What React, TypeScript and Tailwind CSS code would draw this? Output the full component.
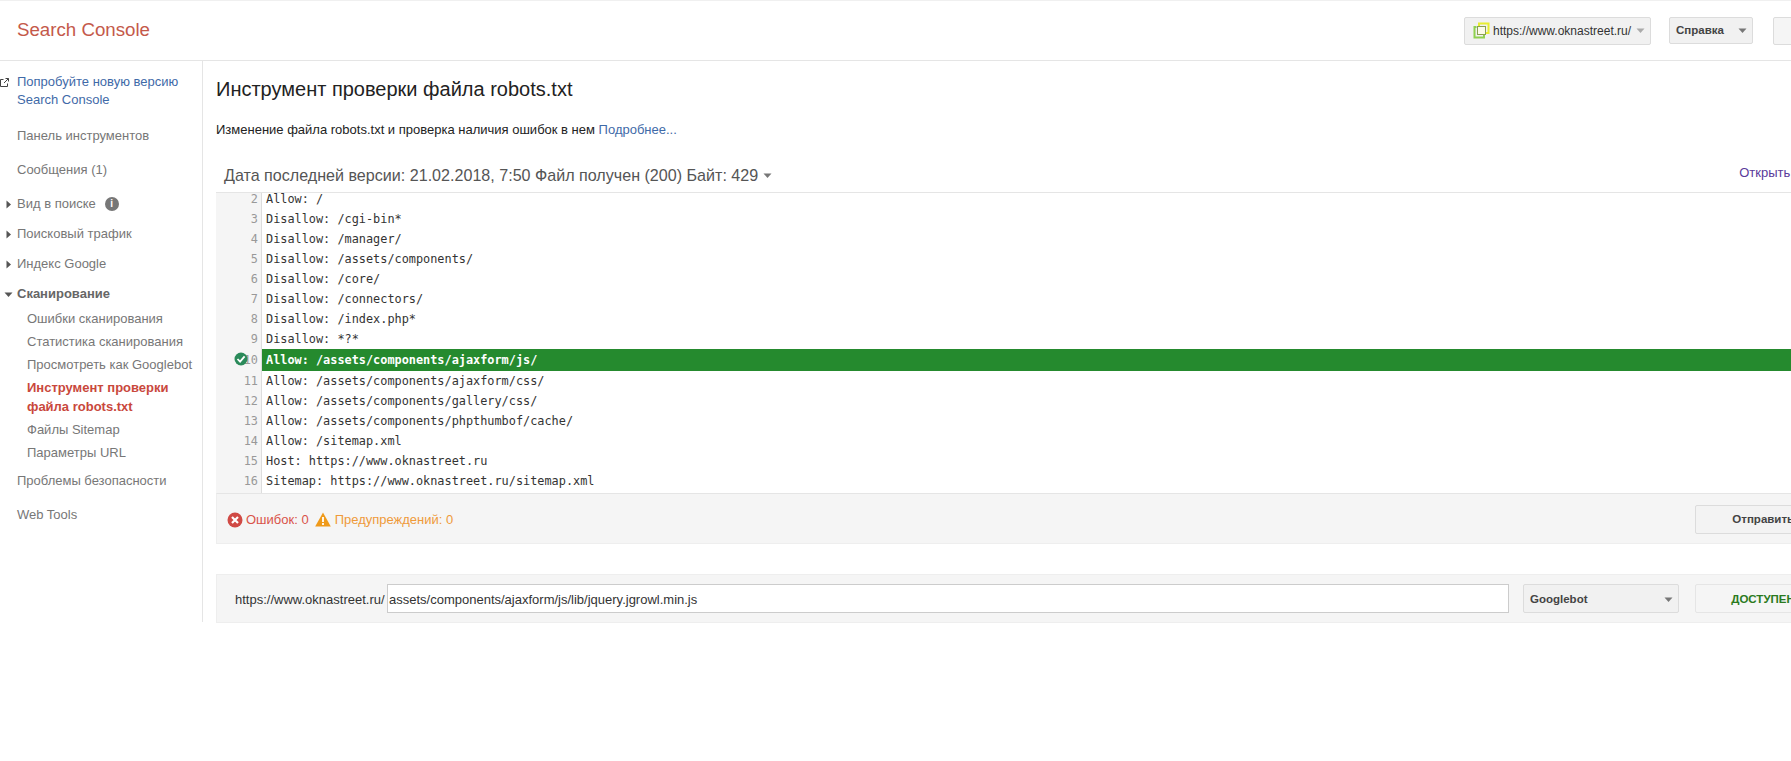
const lines: [number, string][] = [
  [2, "Allow: /"],
  [3, "Disallow: /cgi-bin*"],
  [4, "Disallow: /manager/"],
  [5, "Disallow: /assets/components/"],
  [6, "Disallow: /core/"],
  [7, "Disallow: /connectors/"],
  [8, "Disallow: /index.php*"],
  [9, "Disallow: *?*"],
  [10, "Allow: /assets/components/ajaxform/js/"],
  [11, "Allow: /assets/components/ajaxform/css/"],
  [12, "Allow: /assets/components/gallery/css/"],
  [13, "Allow: /assets/components/phpthumbof/cache/"],
  [14, "Allow: /sitemap.xml"],
  [15, "Host: https://www.oknastreet.ru"],
  [16, "Sitemap: https://www.oknastreet.ru/sitemap.xml"],
];

function Tri({ down = true, className = "" }: { down?: boolean; className?: string }) {
  return (
    <svg width="9" height="9" viewBox="0 0 9 9" className={className}>
      {down ? <path d="M0.5 2.5h8L4.5 7z" fill="currentColor" /> : <path d="M2.5 0.5v8L7 4.5z" fill="currentColor" />}
    </svg>
  );
}

function NavRow({ label, arrow, open, mt, extra }: { label: string; arrow?: boolean; open?: boolean; mt: string; extra?: React.ReactNode }) {
  return (
    <div className={`relative flex h-[30px] items-center pl-[17px] text-[13px] ${mt} ${open ? "font-bold text-[#666]" : "text-[#777]"}`}>
      {arrow && <Tri down={!!open} className="absolute left-[4px] top-[11px] text-[#555]" />}
      {label}
      {extra}
    </div>
  );
}

function Sub({ label }: { label: string }) {
  return <div className="h-[23px] pl-[27px] text-[13px] leading-[23px] text-[#777]">{label}</div>;
}

export default function App() {
  return (
    <div className="h-screen overflow-hidden bg-white font-['Liberation_Sans',Arial,sans-serif] text-[#222]">
      <div className="w-[1900px]">
        <header className="flex h-[61px] items-center border-t border-b border-t-[#f0f0f0] border-b-[#e5e5e5]">
          <div className="w-[1464px] shrink-0 pl-[17px] text-[18.7px] text-[#c4594a]">Search Console</div>
          <div className="flex h-[28px] w-[187px] items-center rounded-[2px] border border-[#dcdcdc] bg-[#f1f1f1] pl-[8px] text-[12px] text-[#333]">
            <svg width="17" height="17" viewBox="0 0 17 17" className="mr-[3px] shrink-0">
              <path d="M6 4V1.5h9.5V11H13" fill="none" stroke="#e8ee30" strokeWidth="2" />
              <path d="M3.5 5H1.5v10.5H11V13" fill="none" stroke="#8fd14f" strokeWidth="2" />
              <rect x="4.5" y="4.5" width="8" height="8" fill="#fbfbe8" stroke="#8aa050" strokeWidth="1" />
            </svg>
            https://www.oknastreet.ru/
            <Tri className="ml-[5px] text-[#aaa]" />
          </div>
          <div className="ml-[18px] flex h-[27px] w-[84px] items-center justify-between rounded-[2px] border border-[#dcdcdc] bg-[#f1f1f1] pl-[6px] pr-[5px] text-[11.5px] font-bold text-[#444]">
            Справка
            <Tri className="text-[#777]" />
          </div>
          <div className="ml-[20px] h-[28px] w-[60px] rounded-[2px] border border-[#dcdcdc] bg-[#f5f5f5]" />
        </header>
        <div className="flex">
          <aside className="h-[561px] w-[203px] shrink-0 border-r border-[#e5e5e5]">
            <div className="relative pl-[17px] pt-[12px] text-[13px] leading-[18px] text-[#3f6aa8]">
              <svg width="9" height="9" viewBox="0 0 9 9" className="absolute left-0 top-[17px] text-[#444]">
                <path d="M3.5 1.5H0.5v7h7V5.5M4 5l4.5-4.5M5.5 0.5h3v3" fill="none" stroke="currentColor" strokeWidth="1" />
              </svg>
              Попробуйте новую версию
              <br />
              Search Console
            </div>
            <NavRow label="Панель инструментов" mt="mt-[12px]" />
            <NavRow label="Сообщения (1)" mt="mt-[4px]" />
            <NavRow
              label="Вид в поиске"
              arrow
              mt="mt-[4px]"
              extra={
                <span className="ml-[9px] flex h-[14px] w-[14px] items-center justify-center rounded-full bg-[#777] text-[10px] font-bold leading-none text-white">i</span>
              }
            />
            <NavRow label="Поисковый трафик" arrow mt="" />
            <NavRow label="Индекс Google" arrow mt="" />
            <NavRow label="Сканирование" arrow open mt="" />
            <div className="-mt-[2px]">
              <Sub label="Ошибки сканирования" />
              <Sub label="Статистика сканирования" />
              <Sub label="Просмотреть как Googlebot" />
              <div className="mb-[2px] mt-[2px] pl-[27px] text-[13px] font-bold leading-[19px] text-[#c9483c]">
                Инструмент проверки
                <br />
                файла robots.txt
              </div>
              <Sub label="Файлы Sitemap" />
              <Sub label="Параметры URL" />
            </div>
            <NavRow label="Проблемы безопасности" mt="mt-[2px]" />
            <NavRow label="Web Tools" mt="mt-[4px]" />
          </aside>
          <main className="min-w-0 flex-1 pl-[13px]">
            <h1 className="flex h-[56px] items-center text-[20px] font-normal text-[#222]">Инструмент проверки файла robots.txt</h1>
            <p className="mt-[3px] text-[13px] leading-[20px] text-[#222]">
              Изменение файла robots.txt и проверка наличия ошибок в нем <span className="text-[#3f6aa8]">Подробнее...</span>
            </p>
            <div className="flex h-[53px] items-end border-b border-[#e5e5e5] pb-[7px] pl-[8px] text-[16.1px] leading-[20px] text-[#555]">
              <span>Дата последней версии: 21.02.2018, 7:50 Файл получен (200) Байт: 429</span>
              <Tri className="mb-[5px] ml-[5px] text-[#777]" />
              <span className="ml-[967px] text-[13px] leading-[24px] text-[#5a3a9a]">Открыть</span>
            </div>
            <div className="flex h-[300px] overflow-hidden font-['DejaVu_Sans_Mono',monospace] text-[11.87px] text-[#333]">
              <div className="w-[46px] shrink-0 border-r border-[#ddd] bg-[#f5f5f5] text-[#999]">
                <div className="-mt-[4px]">
                  {lines.map(([n]) => (
                    <div key={n} className={`relative pr-[3px] text-right ${n === 10 ? "h-[22px] leading-[22px]" : "h-[20px] leading-[20px]"}`}>
                      {n === 10 && (
                        <svg width="14" height="14" viewBox="0 0 14 14" className="absolute left-[18px] top-[3px]">
                          <circle cx="7" cy="7" r="6.5" fill="#2a8a5a" />
                          <path d="M3.5 7l2.6 2.7 4.5-5.4" fill="none" stroke="#fff" strokeWidth="1.8" />
                        </svg>
                      )}
                      {n}
                    </div>
                  ))}
                </div>
              </div>
              <div className="min-w-0 flex-1">
                <div className="-mt-[4px]">
                  {lines.map(([n, t]) => (
                    <div key={n} className={`pl-[4px] ${n === 10 ? "h-[22px] bg-[#258a2e] font-bold leading-[22px] text-white" : "h-[20px] leading-[20px]"}`}>
                      {t}
                    </div>
                  ))}
                </div>
              </div>
            </div>
            <div className="flex h-[51px] items-center border border-[#eee] border-t-[#e5e5e5] bg-[#f5f5f5] pl-[10px] pt-[2px] text-[13px]">
              <svg width="16" height="16" viewBox="0 0 16 16" className="mr-[3px]">
                <circle cx="8" cy="8" r="7.5" fill="#d04a45" />
                <path d="M5 5l6 6M11 5l-6 6" stroke="#fff" strokeWidth="2.2" />
              </svg>
              <span className="text-[#d9534a]">Ошибок: 0</span>
              <svg width="16" height="15" viewBox="0 0 16 15" className="ml-[6px] mr-[4px]">
                <path d="M8 0.5L15.8 14.5H0.2z" fill="#ef9a1a" />
                <path d="M8 5v5M8 11v2" stroke="#fff" strokeWidth="1.8" />
              </svg>
              <span className="text-[#ef9a3a]">Предупреждений: 0</span>
              <div className="ml-[1242px] flex h-[29px] w-[136px] items-center justify-center rounded-[2px] border border-[#dcdcdc] bg-[#f3f3f3] text-[11.5px] font-bold text-[#444]">
                Отправить
              </div>
            </div>
            <div className="mt-[30px] flex h-[49px] items-center border border-[#eee] bg-[#f5f5f5] pl-[18px] text-[13px]">
              <span className="w-[152px] shrink-0 pt-[2px] text-[#333]">https://www.oknastreet.ru/</span>
              <div className="flex h-[29px] w-[1122px] shrink-0 items-center border border-[#ccc] bg-white pl-px pt-[2px] text-[#333]">
                assets/components/ajaxform/js/lib/jquery.jgrowl.min.js
              </div>
              <div className="ml-[14px] flex h-[29px] w-[156px] shrink-0 items-center justify-between rounded-[2px] border border-[#dcdcdc] bg-[#f1f1f1] pl-[6px] pr-[5px] pt-[2px] text-[11.5px] font-bold text-[#444]">
                Googlebot
                <Tri className="text-[#777]" />
              </div>
              <div className="ml-[16px] flex h-[29px] w-[136px] shrink-0 items-center justify-center rounded-[2px] border border-[#e5e5e5] bg-[#f5f5f5] pt-[2px] text-[11.5px] font-bold text-[#2a7a20]">
                ДОСТУПЕН
              </div>
            </div>
          </main>
        </div>
      </div>
    </div>
  );
}
